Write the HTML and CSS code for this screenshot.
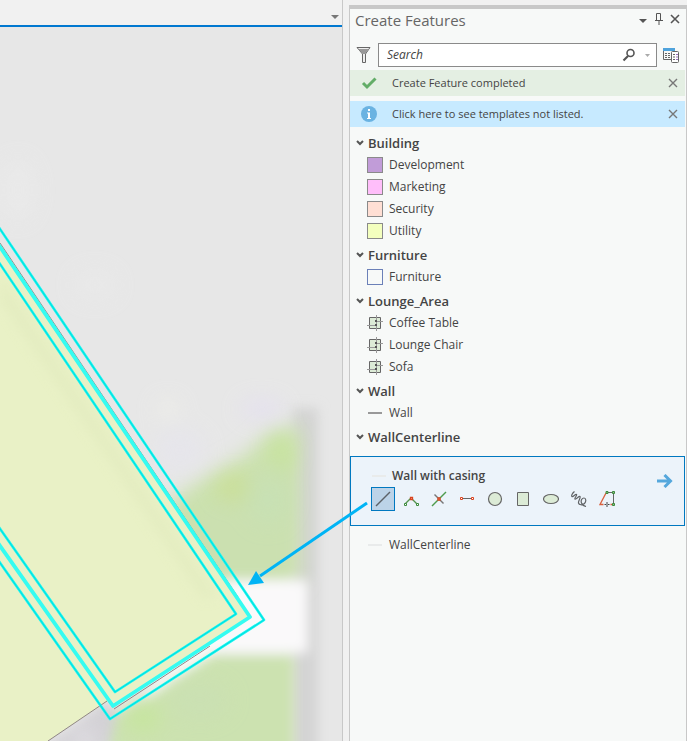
FILE: index.html
```html
<!DOCTYPE html>
<html lang="en">
<head>
    <meta charset="utf-8">
    <title>Create Features</title>
    <link rel="stylesheet" href="styles.css">
</head>
<body>

<main class="map-view">
    <div class="tab-bar">
        <button class="icon-button" aria-label="Open views">
            <svg width="8" height="4"><path d="M0 0h8l-4 4z" fill="#777"/></svg>
        </button>
    </div>
    <svg class="map" viewBox="0 27 342 714" preserveAspectRatio="xMinYMin slice" role="img" aria-label="Map">
        <defs>
            <filter id="soft" x="-50%" y="-50%" width="200%" height="200%"><feGaussianBlur stdDeviation="6"/></filter>
            <filter id="softer" x="-50%" y="-50%" width="200%" height="200%"><feGaussianBlur stdDeviation="10"/></filter>
        </defs>
        <rect y="27" width="342" height="714" fill="#e7e7e7"/>
        <!-- imagery -->
        <path d="M292 408h26v360h-26z" fill="#d4d4d4" filter="url(#soft)"/>
        <path d="M140 590L165 505 200 480 245 455 272 430 300 425V582H180z" fill="#cbe1ae" filter="url(#softer)"/>
        <g filter="url(#soft)">
            <path d="M185 540L225 490 290 450V578H200z" fill="#cbe0b0"/>
            <path d="M110 765V720L210 655H294V765z" fill="#cce2b0"/>
            <path d="M175 655L225 580H308V653H215L140 703z" fill="#faf9fa"/>
            <path d="M40 750L104 702 118 712 108 750z" fill="#d3d1d5"/>
        </g>
        <g filter="url(#softer)" opacity=".7">
            <ellipse cx="262" cy="409" rx="22" ry="10" fill="#e4dff2"/>
            <ellipse cx="168" cy="409" rx="12" ry="10" fill="#f0f0ea"/>
            <ellipse cx="180" cy="450" rx="25" ry="22" fill="#e6e5ed"/>
            <ellipse cx="282" cy="452" rx="12" ry="18" fill="#c6e597"/>
            <ellipse cx="234" cy="488" rx="18" ry="14" fill="#cbdf90"/>
            <ellipse cx="268" cy="500" rx="22" ry="25" fill="#c7e1b6"/>
            <ellipse cx="143" cy="718" rx="18" ry="14" fill="#c5e798"/>
            <ellipse cx="200" cy="700" rx="30" ry="20" fill="#cae0b4"/>
            <ellipse cx="84" cy="738" rx="12" ry="8" fill="#eceaf0"/>
            <ellipse cx="18" cy="190" rx="16" ry="30" fill="#ebebeb"/>
            <ellipse cx="95" cy="285" rx="20" ry="14" fill="#eaeaea"/>
        </g>
        <!-- building -->
        <path d="M0 243L250 617 114 706 108 701 48 741H0z" fill="#e9f1c6"/>
        <path d="M0 276L216 596 204 600 0 300z" fill="#dfe8bb" opacity=".5" filter="url(#soft)"/>
        <path d="M48 741L107 701M114 709L210 646M0 243L238 597" fill="none" stroke="#8f8585"/>
        <!-- wall and casing -->
        <g fill="none" stroke-linejoin="round">
            <path d="M-2 226L264 620 110 719 -2 560M-2 261L236 614 115 692 -2 526" stroke="#18f5f0" stroke-width="2.6"/>
            <path d="M-2 226L264 620 110 719 -2 560M-2 261L236 614 115 692 -2 526" stroke="#00dede"/>
            <path d="M-2 244L250 617 113 706 -2 543" stroke="#35fcf1" stroke-width="3.8"/>
        </g>
    </svg>
</main>

<aside class="panel">
    <header class="panel-header">
        <h1>Create Features</h1>
        <button class="icon-button" aria-label="Options">
            <svg width="16" height="16"><path d="M4 7h8l-4 4z" fill="#555"/></svg>
        </button>
        <button class="icon-button" aria-label="Auto hide">
            <svg width="16" height="16" fill="none" stroke="#555"><path d="M5.500 8V1.500h4V8M4 8.500h8M8 9v4M9.500 2v6"/></svg>
        </button>
        <button class="icon-button" aria-label="Close">
            <svg width="16" height="16" fill="none" stroke="#555" stroke-width="1.600"><path d="M4 3l8 8M12 3l-8 8"/></svg>
        </button>
    </header>

    <div class="search-row">
        <button class="icon-button" aria-label="Filter">
            <svg width="16" height="18"><path d="M1 1.500h13L9.500 8v8.500h-3V8z" fill="#eee" stroke="#666"/><path d="M2 3h11L9 8H7z" fill="#999"/></svg>
        </button>
        <div class="search-box">
            <input type="text" placeholder="Search" aria-label="Search">
            <button class="icon-button" aria-label="Run search">
                <svg width="14" height="14" fill="none" stroke="#555"><circle cx="8.500" cy="5" r="3.500" stroke-width="1.600"/><path d="M6 8l-4.500 4.500" stroke-width="2.200"/></svg>
            </button>
            <button class="icon-button" aria-label="Search options">
                <svg width="5" height="3"><path d="M0 0h5l-2.500 3z" fill="#aaa"/></svg>
            </button>
        </div>
        <button class="icon-button" aria-label="Manage templates">
            <svg width="17" height="17" fill="none">
                <path d="M.5 3.500v9h8M11.500 3.500v1" stroke="#666"/>
                <path d="M0 1h12v3H0z" fill="#4fa3dc"/>
                <path d="M2 6.500h2M2 8.500h2M2 10.500h2M5 6.500h2M5 8.500h2M5 10.500h2" stroke="#666"/>
                <rect x="8.500" y="4.500" width="7" height="11" rx="1" fill="#fff" stroke="#666"/>
                <path d="M10 7.500h2M10 10h2M10 12.500h2" stroke="#666"/><path d="M13 7.500h2M13 10h2M13 12.500h2" stroke="#9b6fc0"/>
            </svg>
        </button>
    </div>

    <div class="message success">
        <svg width="16" height="16" fill="none" stroke="#63ad68" stroke-width="3"><path d="M2 8l4 4 8.500-8.500"/></svg>
        <span>Create Feature completed</span>
        <button class="icon-button" aria-label="Dismiss">
            <svg width="10" height="10" stroke="#777" stroke-width="1.400"><path d="M1 1l8 8M9 1l-8 8"/></svg>
        </button>
    </div>
    <div class="message info">
        <svg width="16" height="16"><circle cx="8" cy="8" r="8" fill="#6ab3e2"/><path d="M7 3h2v2H7zM6 6.500h3V12h1v1H6v-1h1V7.500H6z" fill="#fff"/></svg>
        <a href="#">Click here to see templates not listed.</a>
        <button class="icon-button" aria-label="Dismiss">
            <svg width="10" height="10" stroke="#777" stroke-width="1.400"><path d="M1 1l8 8M9 1l-8 8"/></svg>
        </button>
    </div>

    <svg class="symbols">
        <symbol id="chevron" viewBox="0 0 8 6"><path d="M1 1l3 3 3-3" fill="none" stroke="#555" stroke-width="2"/></symbol>
        <symbol id="furniture" viewBox="0 0 16 16">
            <path d="M2.500 2.500h11v11h-11z" fill="#dcebd6" stroke="#666"/>
            <path d="M9.500 0v16M0 10.500h9M9 6.500h7" stroke="#999"/>
            <path d="M8 5h2v2H8zM8 9h2v2H8z" fill="#555"/>
        </symbol>
    </svg>

    <div class="templates">
        <section class="group">
            <h2><svg width="8" height="6"><use href="#chevron"/></svg>Building</h2>
            <ul>
                <li><span class="swatch development"></span>Development</li>
                <li><span class="swatch marketing"></span>Marketing</li>
                <li><span class="swatch security"></span>Security</li>
                <li><span class="swatch utility"></span>Utility</li>
            </ul>
        </section>
        <section class="group">
            <h2><svg width="8" height="6"><use href="#chevron"/></svg>Furniture</h2>
            <ul>
                <li><span class="swatch furniture"></span>Furniture</li>
            </ul>
        </section>
        <section class="group">
            <h2><svg width="8" height="6"><use href="#chevron"/></svg>Lounge_Area</h2>
            <ul>
                <li><svg width="16" height="16"><use href="#furniture"/></svg>Coffee Table</li>
                <li><svg width="16" height="16"><use href="#furniture"/></svg>Lounge Chair</li>
                <li><svg width="16" height="16"><use href="#furniture"/></svg>Sofa</li>
            </ul>
        </section>
        <section class="group">
            <h2><svg width="8" height="6"><use href="#chevron"/></svg>Wall</h2>
            <ul>
                <li><span class="line wall"></span>Wall</li>
            </ul>
        </section>
        <section class="group">
            <h2><svg width="8" height="6"><use href="#chevron"/></svg>WallCenterline</h2>
            <ul>
                <li class="selected">
                    <div class="selected-name">
                        <span class="line"></span>Wall with casing
                        <button class="icon-button" aria-label="Open template properties">
                            <svg width="16" height="14" fill="none" stroke="#55a7dc" stroke-width="3"><path d="M0 7h14M7.500 1l6 6-6 6"/></svg>
                        </button>
                    </div>
                    <div class="tools">
                        <button class="tool active" aria-label="Line">
                            <svg width="16" height="16" fill="none" stroke="#5c6268" stroke-width="1.400"><path d="M1 15L15 1"/></svg>
                        </button>
                        <button class="tool" aria-label="Radial line">
                            <svg width="16" height="16" fill="none"><path d="M2 13l6-6 6 6" stroke="#55934f" stroke-width="1.400"/><path d="M1.500 12.500h2v2h-2zM13.500 12.500h2v2h-2z" fill="#fff" stroke="#3d8b3d"/><path d="M7.500 6.500h2v2h-2z" fill="#fff" stroke="#d9431e" stroke-width="1.300"/></svg>
                        </button>
                        <button class="tool" aria-label="Split">
                            <svg width="16" height="16" fill="none"><path d="M1 15L15 1" stroke="#4e9b4e" stroke-width="1.400"/><path d="M3.500 3.500l9 9" stroke="#777" stroke-width="1.400"/><path d="M7 7h2v2H7z" fill="#fff" stroke="#d9431e" stroke-width="1.300"/></svg>
                        </button>
                        <button class="tool" aria-label="Two-point line">
                            <svg width="16" height="16" fill="#fff"><path d="M3 7.500h10" stroke="#666"/><path d="M1.500 6.500h2v2h-2zM12.500 6.500h2v2h-2z" stroke="#d9431e"/></svg>
                        </button>
                        <button class="tool" aria-label="Circle">
                            <svg width="16" height="16"><circle cx="8" cy="8" r="6.500" fill="#dcebd6" stroke="#666" stroke-width="1.200"/></svg>
                        </button>
                        <button class="tool" aria-label="Rectangle">
                            <svg width="16" height="16"><path d="M2.500 1.500h11v13h-11z" fill="#dcebd6" stroke="#666"/></svg>
                        </button>
                        <button class="tool" aria-label="Ellipse">
                            <svg width="16" height="16"><ellipse cx="8" cy="8" rx="7.500" ry="4.500" fill="#dcebd6" stroke="#666" stroke-width="1.200"/></svg>
                        </button>
                        <button class="tool" aria-label="Freehand">
                            <svg width="16" height="16" fill="none" stroke="#5f6265" stroke-width="1.200"><path d="M3.500 .5C1.500 2 0 4.500 1 5.500S4.500 2.500 5.500 3.500 3 7 4 8s4-3.500 5-2.500-2 4.500-1.500 6.500 4 2.500 6 .500 1.500-5.500-.500-5.500-3.500 2.500-2.500 5 2.500 3 4.500 3.500"/></svg>
                        </button>
                        <button class="tool" aria-label="Trace">
                            <svg width="16" height="16" fill="none"><path d="M7 2L1 13.500H4.500M11.500 13.500h2" stroke="#d9603e" stroke-width="1.300"/><path d="M8 1.500h6.500v12" stroke="#666"/><path d="M8 11v2M8 14v2M5.500 13.500h2M8.500 13.500h2" stroke="#444"/><path d="M7 .5h2v2H7zM13.500 .5h2v2h-2zM13.500 12.500h2v2h-2z" fill="#8cc28a" stroke="#3d8b3d"/></svg>
                        </button>
                    </div>
                    <svg class="pointer" width="122" height="86" fill="none">
                        <path d="M119 2L12 75" stroke="#00b4f5" stroke-width="3"/>
                        <path d="M0 84L8 70 16 82z" fill="#00b4f5"/>
                    </svg>
                </li>
                <li><span class="line"></span>WallCenterline</li>
            </ul>
        </section>
    </div>
</aside>

</body>
</html>
```

FILE: styles.css
```css
* {
    box-sizing: border-box;
}
body {
    margin: 0;
    display: flex;
    gap: 6px;
    min-height: 100vh;
    background: #f1f1f1;
    color: #444;
    font: 12px/22px "Open Sans", "Noto Sans", sans-serif;
}
h1, h2, ul {
    margin: 0;
    padding: 0;
}
ul {
    list-style: none;
}
svg {
    display: block;
    flex: none;
}
.icon-button {
    display: flex;
    align-items: center;
    justify-content: center;
    padding: 0;
    border: 0;
    background: none;
}
.symbols {
    display: none;
}

/* map */
.map-view {
    flex: 1;
    min-width: 0;
    display: flex;
    flex-direction: column;
    border-right: 1px solid #c8c8c8;
}
.tab-bar {
    display: flex;
    justify-content: flex-end;
    height: 27px;
    padding: 9px 3px 0 0;
    border-bottom: 2px solid #0078d0;
}
.map {
    flex: 1;
    width: 100%;
    min-height: 0;
}

/* panel */
.panel {
    flex: none;
    width: 338px;
    margin-top: 5px;
    padding-right: 1px;
    background: #f7f9f8;
    border: 1px solid #c8c8c8;
    border-top-width: 4px;
    border-bottom: 0;
}
.panel-header {
    display: flex;
    align-items: center;
    height: 22px;
    padding: 0 2px 0 5px;
}
.panel-header h1 {
    flex: 1;
    color: #666;
    font-size: 15px;
    font-weight: 400;
}
.search-row {
    display: flex;
    align-items: center;
    gap: 6px;
    height: 24px;
    margin: 12px 5px 3px 6px;
}
.search-box {
    flex: 1;
    display: flex;
    gap: 9px;
    align-self: stretch;
    padding: 0 6px 0 8px;
    border: 1px solid #8a8a8a;
    background: #fff;
}
.search-box input {
    flex: 1;
    min-width: 0;
    padding: 0;
    border: 0;
    outline: 0;
    background: none;
    font: inherit;
}
.search-box input::placeholder {
    color: #444;
    font-style: italic;
}
.message {
    display: flex;
    align-items: center;
    gap: 15px;
    height: 26px;
    margin-bottom: 5px;
    padding: 0 7px 0 11px;
    font-size: 11px;
}
.message span,
.message a {
    flex: 1;
    color: inherit;
    text-decoration: none;
}
.success {
    background: #e4efe3;
}
.info {
    background: #c7eaff;
}

/* templates */
.group + .group {
    margin-top: 2px;
}
.group h2 {
    display: flex;
    align-items: center;
    gap: 4px;
    padding-left: 6px;
    font-size: 13px;
    font-weight: 600;
    line-height: 22px;
}
.group li {
    display: flex;
    align-items: center;
    gap: 6px;
    padding-left: 17px;
}
.swatch {
    width: 16px;
    height: 16px;
    border: 1px solid #8a8a8a;
}
.development {
    background: #c19cd8;
}
.marketing {
    background: #ffbefa;
}
.security {
    background: #ffdfd4;
}
.utility {
    background: #f3ffbe;
}
.furniture {
    border-color: #6b80b8;
}
.line {
    width: 14px;
    height: 2px;
    margin: 0 1px;
    background: #e9ebeb;
}
.wall {
    background: #999;
}
.group .selected {
    position: relative;
    display: block;
    height: 70px;
    margin: 8px 0;
    padding: 8px 7px 0 20px;
    border: 1px solid #0078c0;
    background: #ecf3fa;
}
.selected-name {
    display: flex;
    align-items: center;
    gap: 5px;
    height: 22px;
    font-weight: 600;
}
.selected-name .icon-button {
    margin: 10px 4px 0 auto;
}
.tools {
    display: flex;
    gap: 4px;
}
.tool {
    display: flex;
    align-items: center;
    justify-content: center;
    width: 24px;
    height: 24px;
    padding: 0;
    border: 1px solid transparent;
    background: none;
}
.tool.active {
    border-color: #0078c0;
    background: #bcd3e8;
}
/* callout from the line tool to the drawn wall */
.pointer {
    position: absolute;
    top: 44px;
    left: -103px;
    pointer-events: none;
}
```
